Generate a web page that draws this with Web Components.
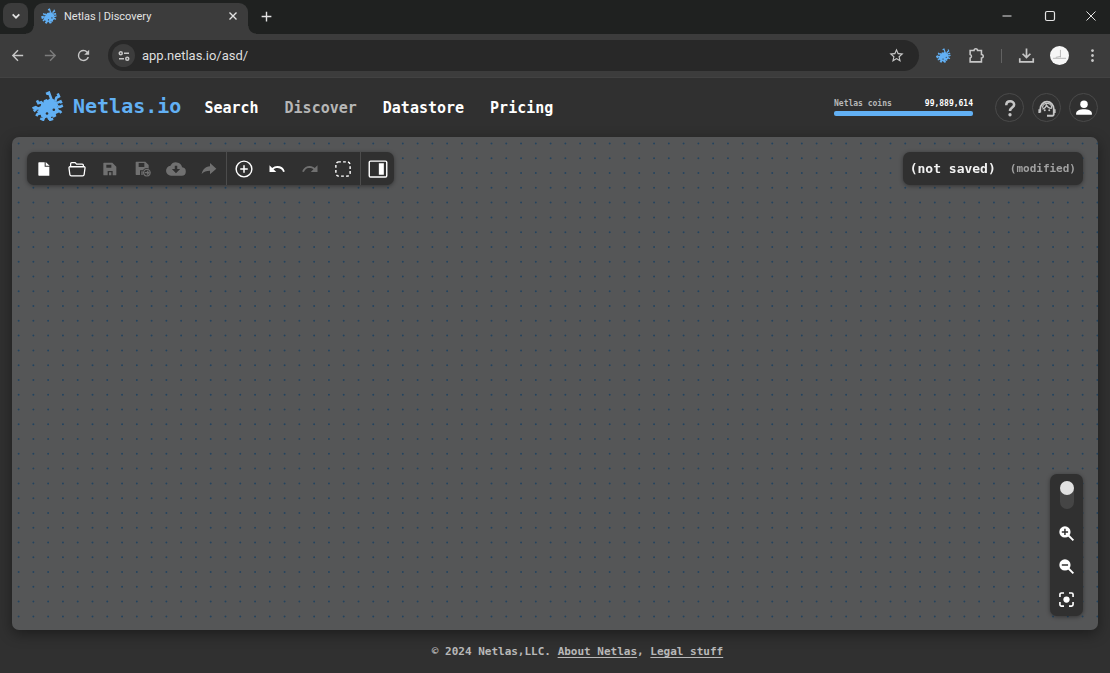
<!DOCTYPE html>
<html lang="en">
<head>
<meta charset="utf-8">
<title>Netlas | Discovery</title>
<style>
html, body { margin: 0; background: #303030; }
body { font-family: "DejaVu Sans Mono", "Liberation Mono", monospace; color: #fff; }
</style>
</head>
<body>
<browser-window></browser-window>
<script>
const define = (name, html, setup) => {
  const t = document.createElement('template');
  t.innerHTML = '<style>*{box-sizing:border-box}button{border:0;padding:0;margin:0;background:none;color:inherit;font:inherit;display:flex;align-items:center;justify-content:center}a{color:inherit}</style>' + html;
  customElements.define(name, class extends HTMLElement {
    constructor() {
      super();
      this.attachShadow({ mode: 'open' }).append(t.content.cloneNode(true));
    }
    connectedCallback() { if (setup) setup(this, this.shadowRoot); }
  });
};

const stroke = (d, w = 2) => `<path d="${d}" fill="none" stroke="currentColor" stroke-width="${w}"/>`;
const fill = d => `<path d="${d}" fill="currentColor" fill-rule="evenodd"/>`;
const ICONS = {
  chevron: stroke('M7 9.5l5 5 5-5', 2.6),
  close: stroke('M6 6l12 12M18 6L6 18', 2.4),
  winclose: stroke('M3 3l18 18M21 3L3 21', 2),
  plus: stroke('M12 3v18M3 12h18', 2.6),
  minimize: stroke('M3 12h18', 2),
  maximize: '<rect x="3" y="3" width="18" height="18" rx="3" fill="none" stroke="currentColor" stroke-width="2.400"/>',
  back: fill('M20 11H7.83l5.59-5.59L12 4l-8 8 8 8 1.41-1.41L7.83 13H20v-2z'),
  forward: fill('M12 4l-1.41 1.41L16.17 11H4v2h12.17l-5.58 5.59L12 20l8-8z'),
  reload: fill('M17.65 6.35A7.96 7.96 0 0 0 12 4a8 8 0 1 0 7.73 10h-2.08A6 6 0 1 1 12 6c1.66 0 3.14.69 4.22 1.78L13 11h7V4l-2.35 2.35z'),
  tune: '<g fill="none" stroke="currentColor" stroke-width="3"><circle cx="5.500" cy="6.500" r="3"/><path d="M12 6.500h10M2 17.500h10"/><circle cx="18.500" cy="17.500" r="3"/></g>',
  star: fill('M22 9.24l-7.19-.62L12 2 9.19 8.63 2 9.24l5.46 4.73L5.82 21 12 17.27 18.18 21l-1.63-7.03L22 9.24zM12 15.4l-3.76 2.27 1-4.28-3.32-2.88 4.38-.38L12 6.1l1.71 4.04 4.38.38-3.32 2.88 1 4.28L12 15.4z'),
  puzzle: stroke('M3 5h5.500a2.500 2.500 0 0 1 5 0H19v5.500a2.500 2.500 0 0 1 0 5V21H3v-5.500a2.600 2.600 0 0 0 0-5z', 2.200),
  download: stroke('M12 2v13M6.500 9.500l5.500 5.500 5.500-5.500M2.500 16v5h19V16', 2.400),
  dots: fill('M12 3a2 2 0 1 0 .01 0zM12 10a2 2 0 1 0 .01 0zM12 17a2 2 0 1 0 .01 0z'),
  file: fill('M4 2h9v6.500h7V22H4.500a1 1 0 0 1-1-1V3a1 1 0 0 1 1-1zM14.500 1.500L20.500 7h-6z'),
  folder: stroke('M3.500 9V5a1.500 1.500 0 0 1 1.500-1.500h4.500l2 2h7.500A1.500 1.500 0 0 1 20.500 7V9M2.500 9h19a1.200 1.200 0 0 1 1.200 1.500L21.500 19.500a2 2 0 0 1-2 1.700h-15a2 2 0 0 1-2-1.700L1.300 10.500A1.200 1.200 0 0 1 2.500 9z', 1.7),
  save: fill('M3 2.500h12.500l6 6v12a1 1 0 0 1-1 1H16v-6.500H8.500v6.500H3a1 1 0 0 1-1-1v-17a1 1 0 0 1 1-1zM6.500 5.500V10H14V5.500zM10.500 17h3.500V21.500h-3.500z'),
  saveas: fill('M2 1h13.500l5 5v5.500a6 6 0 0 0-8.500 2.500H7.500v7H2a1 1 0 0 1-1-1V2a1 1 0 0 1 1-1zM5.500 3V9H14V3zM9.500 15.500h2V21h-2z') + stroke('M17.800 12.500a5 5 0 1 1-.01 0M14.500 17.500h6M18 14.800l2.700 2.700L18 20.200', 1.8),
  cloud: fill('M19.350 10.040A7.500 7.500 0 0 0 5.350 8.040 6 6 0 0 0 6 20h13a5 5 0 0 0 .350-9.960zM10.500 8h3v4h3.500l-5 5-5-5h3.500z'),
  share: fill('M13.500 8V3l9.500 8.500-9.500 8.500v-5.500c-5.500 0-9.500 1.500-12.500 5C2.500 13.500 6 8.500 13.500 8z'),
  add: '<circle cx="12" cy="12" r="10.500" fill="none" stroke="currentColor" stroke-width="1.900"/>' + stroke('M12 7v10M7 12h10', 2),
  undo: fill('M12.500 8c-2.650 0-5.050.990-6.900 2.600L2 7v9h9l-3.620-3.620A8 8 0 0 1 20.080 16l2.370-.780A10.500 10.500 0 0 0 12.500 8z'),
  redo: fill('M18.400 10.600A10.500 10.500 0 0 0 1.540 15.220L3.900 16a8 8 0 0 1 12.720-3.620L13 16h9V7l-3.600 3.600z'),
  select: '<rect x="2.500" y="2.500" width="19" height="19" rx="4" fill="none" stroke="currentColor" stroke-width="1.900" stroke-dasharray="3.700 2.900" stroke-dashoffset="1"/>',
  panel: '<rect x="1.500" y="2.500" width="21" height="19" rx="1.500" fill="none" stroke="currentColor" stroke-width="1.700"/><path d="M13 5h6v14h-6z" fill="currentColor"/>',
  help: stroke('M7 8.200C7 1.200 17.500 1.400 17.500 7.800 17.500 11.500 12 11.500 12 16', 3.400) + '<circle cx="12" cy="21" r="2.200" fill="currentColor"/>',
  agent: stroke('M3 18v-4.500a9 10 0 0 1 18 0v7a1.800 1.800 0 0 1-1.800 1.800H12', 2.400) + stroke('M6 13.500c3-.8 4.800-3 5.200-5.300C12.800 11 15.500 12.700 18.500 12.300M6 11.500a6 5.500 0 0 1 12.300 0', 1.700) + stroke('M1.800 13.500v5M22.200 13.500v5', 2.600) + '<circle cx="9" cy="15" r="1.300" fill="currentColor"/><circle cx="15" cy="15" r="1.300" fill="currentColor"/>',
  user: '<circle cx="12" cy="7" r="5" fill="currentColor"/>' + fill('M1.500 21v-2c0-3.500 5-5.500 10.500-5.500s10.500 2 10.500 5.500v2z'),
  zoomin: '<circle cx="9.500" cy="9.500" r="9" fill="currentColor"/><path d="M9.500 4.500v10M4.500 9.500h10" stroke="#303030" stroke-width="2.400"/>' + stroke('M14 14l9 9', 3),
  zoomout: '<circle cx="9.500" cy="9.500" r="9" fill="currentColor"/><path d="M4.500 9.500h10" stroke="#303030" stroke-width="2.400"/>' + stroke('M14 14l9 9', 3),
  focus: '<circle cx="12" cy="12" r="5" fill="currentColor"/>' + stroke('M1.500 8V4a2.500 2.500 0 0 1 2.500-2.500h4M16 1.500h4a2.500 2.500 0 0 1 2.500 2.500v4M22.500 16v4a2.500 2.500 0 0 1-2.500 2.500h-4M8 22.500H4a2.500 2.500 0 0 1-2.500-2.500v-4', 2.600)
};

define('ui-icon', `<style>:host{display:block;width:16px;height:16px}svg{display:block;width:100%;height:100%;overflow:visible}</style><svg viewBox="0 0 24 24" aria-hidden="true"></svg>`,
  (el, root) => { root.querySelector('svg').innerHTML = ICONS[el.getAttribute('name')]; });

define('netlas-mark', `<style>:host{display:block;width:32px;height:30px;color:#62b0f4}svg{display:block;width:100%;height:100%}</style>
<svg viewBox="21 28 98 93" aria-hidden="true">
<path fill="currentColor" d="M49 68l6-3 2-8 9-4 3 3 6-4 12 1 4 7 6 1 5 12-3 3 5 9-3 2 3 8-10 4 2 7-9 5-4-4-8 4 2 5-6 2-4-8-9 3-9-5-2-7-8-3-3-8 6-3-4-8 9-4z"/>
<path fill="none" stroke="currentColor" stroke-width="8" d="M64 37l9-4 8 22M100 36l4 9-8 4-4 12M98 65l11-5 3 6M116 73l-9 4-8-1M36 57l4 9 9-3 8 8M22 82l10-4 10 6M26 91l8-7M98 88l10 4 3 4M60 104l-5 13-9-4M50 96l-13 4-3 6M74 104l3 13 9-3"/>
<circle cx="67" cy="98" r="4" fill="#303030"/><circle cx="88" cy="86" r="4" fill="#303030"/>
</svg>`);

define('tab-strip', `<style>
:host{display:flex;height:34px;background:#1f2120;color:#e3e3e3;font-family:Roboto,"Open Sans",sans-serif}
.search{width:25px;height:25px;margin:3px 6px 0 3px;border-radius:8px;background:#3c3c3c}
.search ui-icon{width:16px;height:16px}
.tab{position:relative;display:flex;align-items:center;width:214px;margin-top:3px;padding:0 8px 5px 7px;border-radius:9px 9px 0 0;background:#3c3c3c;font-size:11px}
.tab::before,.tab::after{content:"";position:absolute;bottom:0;width:8px;height:8px}
.tab::before{left:-8px;background:radial-gradient(circle at 0 0,#0000 7px,#3c3c3c 8px)}
.tab::after{right:-8px;background:radial-gradient(circle at 100% 0,#0000 7px,#3c3c3c 8px)}
netlas-mark{width:16px;height:16px;margin-right:7px}
.title{flex:1}
.x{width:14px;height:14px}.x ui-icon{width:14px;height:14px}
.new{width:37px;height:32px}
.new ui-icon{width:13px;height:13px}
.win{display:flex;margin-left:auto}
.win button{width:43px;height:32px}
.win ui-icon{width:12px;height:12px}
.win button:last-child{width:39px}
</style>
<button class="search" aria-label="Search tabs"><ui-icon name="chevron"></ui-icon></button>
<div class="tab"><netlas-mark></netlas-mark><span class="title"><slot></slot></span><button class="x" aria-label="Close tab"><ui-icon name="close"></ui-icon></button></div>
<button class="new" aria-label="New tab"><ui-icon name="plus"></ui-icon></button>
<div class="win"><button aria-label="Minimize"><ui-icon name="minimize"></ui-icon></button><button aria-label="Maximize"><ui-icon name="maximize"></ui-icon></button><button aria-label="Close window"><ui-icon name="winclose"></ui-icon></button></div>`);

define('address-bar', `<style>
:host{display:flex;align-items:center;height:44px;padding:0 1px;background:#3c3c3c;border-bottom:1px solid #424242;color:#c7c7c7}
button{width:33px;height:32px}
button[disabled]{color:#7c7c7c}
.url{display:flex;align-items:center;flex:1;height:31px;margin:0 8px 0 8px;padding:0 6px 0 4px;border-radius:16px;background:#282828}
.site{width:23px;height:23px;border-radius:50%;background:#3c3c3c}
.site ui-icon{width:12px;height:12px}
input{flex:1;min-width:0;margin:0 0 0 7px;padding:0;border:0;outline:0;background:none;color:#dedede;font:13px Roboto,"Open Sans",sans-serif}
netlas-mark{width:15px;height:15px}
.sep{width:1px;height:14px;margin:0 8px;background:#626262}
.avatar{width:19px;height:19px;border-radius:50%;background:#f6f6f6;color:#999}
.avatar svg{display:block;width:15px;height:15px;margin:2px}
ui-icon{width:17px;height:17px}
</style>
<button aria-label="Back"><ui-icon name="back"></ui-icon></button>
<button aria-label="Forward" disabled><ui-icon name="forward"></ui-icon></button>
<button aria-label="Reload"><ui-icon name="reload"></ui-icon></button>
<div class="url"><button class="site" aria-label="Site information"><ui-icon name="tune"></ui-icon></button><input aria-label="Address" value="app.netlas.io/asd/"><button aria-label="Bookmark"><ui-icon name="star"></ui-icon></button></div>
<button aria-label="Netlas extension"><netlas-mark></netlas-mark></button>
<button aria-label="Extensions"><ui-icon name="puzzle"></ui-icon></button>
<span class="sep"></span>
<button aria-label="Downloads"><ui-icon name="download"></ui-icon></button>
<button aria-label="Profile"><span class="avatar"><svg viewBox="0 0 16 16" fill="none" stroke="currentColor" stroke-width=".7"><path d="M9 2v8M1 11h14M4 10l5-1"/></svg></span></button>
<button aria-label="Menu"><ui-icon name="dots"></ui-icon></button>`);

define('coin-meter', `<style>
:host{display:block;width:139px}
label{display:flex;justify-content:space-between;margin-bottom:3px;font-size:8px;line-height:9px;font-weight:bold}
.n{color:#b8b8b8}
progress{display:block;width:100%;height:5px;appearance:none;border:0;border-radius:2px;overflow:hidden}
progress::-webkit-progress-bar{background:#555}
progress::-webkit-progress-value{background:#62b0f4}
</style>
<label for="p"><span class="n">Netlas coins</span><span><slot></slot></span></label>
<progress id="p" value="100" max="100"></progress>`);

define('app-header', `<style>
:host{display:flex;align-items:center;height:59px;padding:0 12px 0 32px}
.brand{display:flex;align-items:center;gap:9px;margin-bottom:4px;color:#62b0f4;font-size:20px;line-height:24px;font-weight:bold;text-decoration:none}
nav{display:flex;gap:26px;margin-left:23px}
nav a{font-size:15px;line-height:20px;font-weight:bold;text-decoration:none}
nav a[aria-current]{color:#b6b6b6}
coin-meter{margin-left:auto;margin-right:22px}
.round{display:flex;gap:8px}
.round button{width:29px;height:29px;border:1px solid #4a4a4a;border-radius:50%}
.round ui-icon{width:18px;height:18px;color:#c6c6c6}
.round ui-icon[name=user]{color:#fff}
</style>
<a class="brand" href="#home"><netlas-mark></netlas-mark><span>Netlas.io</span></a>
<nav><a href="#search">Search</a><a href="#discover" aria-current="page">Discover</a><a href="#datastore">Datastore</a><a href="#pricing">Pricing</a></nav>
<coin-meter>99,889,614</coin-meter>
<div class="round"><button aria-label="Help"><ui-icon name="help"></ui-icon></button><button aria-label="Support"><ui-icon name="agent"></ui-icon></button><button aria-label="Account"><ui-icon name="user"></ui-icon></button></div>`);

define('graph-toolbar', `<style>
:host{display:flex;height:33px;border-radius:7px;background:#303030;box-shadow:0 1px 4px #0006}
div{display:flex;width:199px}
div + div{width:134px;border-left:1px solid #4c4c4c}
div:last-child{width:34px}
button{flex:1}
button[disabled]{color:#707070}
ui-icon[name=folder],ui-icon[name=select],ui-icon[name=add],ui-icon[name=undo],ui-icon[name=redo]{width:18px;height:18px}
ui-icon[name=panel],ui-icon[name=cloud]{width:20px;height:20px}
</style>
<div><button aria-label="New"><ui-icon name="file"></ui-icon></button><button aria-label="Open"><ui-icon name="folder"></ui-icon></button><button aria-label="Save" disabled><ui-icon name="save"></ui-icon></button><button aria-label="Save as" disabled><ui-icon name="saveas"></ui-icon></button><button aria-label="Export" disabled><ui-icon name="cloud"></ui-icon></button><button aria-label="Share" disabled><ui-icon name="share"></ui-icon></button></div>
<div><button aria-label="Add node"><ui-icon name="add"></ui-icon></button><button aria-label="Undo"><ui-icon name="undo"></ui-icon></button><button aria-label="Redo" disabled><ui-icon name="redo"></ui-icon></button><button aria-label="Select area"><ui-icon name="select"></ui-icon></button></div>
<div><button aria-label="Toggle panel"><ui-icon name="panel"></ui-icon></button></div>`);

define('graph-status', `<style>
:host{display:flex;align-items:center;gap:14px;height:33px;padding:0 7px;border-radius:7px;background:#303030;box-shadow:0 1px 4px #0006;font-size:13px;white-space:nowrap}
b{font-weight:bold;color:#f2f2f2}
small{font-size:11px;font-weight:bold;color:#a0a0a0}
</style><b><slot></slot></b><small><slot name="state"></slot></small>`);

define('zoom-panel', `<style>
:host{display:flex;flex-direction:column;align-items:center;width:33px;padding:7px 0 0;border-radius:7px;background:#303030;box-shadow:0 1px 4px #0006}
input{appearance:none;width:14px;height:28px;margin:0 0 8px;border-radius:7px;background:#454545}
input::before{content:"";display:block;width:14px;height:14px;border-radius:50%;background:#e0e0e0}
button{width:33px;height:33px}
ui-icon{width:15px;height:15px}
</style>
<input type="checkbox" role="switch" aria-label="Lock graph">
<button aria-label="Zoom in"><ui-icon name="zoomin"></ui-icon></button>
<button aria-label="Zoom out"><ui-icon name="zoomout"></ui-icon></button>
<button aria-label="Fit"><ui-icon name="focus"></ui-icon></button>`);

define('graph-canvas', `<style>
:host{position:relative;display:flex;flex-direction:column;justify-content:space-between;margin:0 12px;padding:15px 15px 14px;border-radius:7px;overflow:hidden;background:#555657}
.grid{position:absolute;inset:0;width:100%;height:100%}
.top{position:relative;display:flex;justify-content:space-between;align-items:start}
zoom-panel{position:relative;align-self:flex-end}
</style>
<svg class="grid" aria-hidden="true"><defs><pattern id="dots" width="133" height="133" patternUnits="userSpaceOnUse"></pattern></defs><rect width="100%" height="100%" fill="url(#dots)"/></svg>
<div class="top"><graph-toolbar></graph-toolbar><graph-status>(not saved)<span slot="state">(modified)</span></graph-status></div>
<zoom-panel></zoom-panel>`,
  (el, root) => {
    // Nine dots per tile in each direction.
    let s = '';
    for (let r = 0; r < 9; r++) for (let c = 0; c < 9; c++)
      s += `<circle cx="${6.6 + c * 133 / 9}" cy="${6.5 + r * 133 / 9}" r="1" fill="#24435e"/>`;
    root.querySelector('pattern').innerHTML = s;
  });

define('app-footer', `<style>
:host{display:block;padding:14px 0 13px 45px;text-align:center;font-size:11px;line-height:16px;font-weight:bold;color:#b8b8b8}
a{text-underline-offset:2px;text-decoration-thickness:1px}
</style><footer>© 2024 Netlas,LLC. <a href="#about">About Netlas</a>, <a href="#legal">Legal stuff</a></footer>`);

define('browser-window', `<style>
:host{display:flex;flex-direction:column;min-height:100vh;background:#303030}
main{flex:1;display:flex;flex-direction:column;filter:drop-shadow(0 4px 7px #0006)}
graph-canvas{flex:1}
</style>
<tab-strip>Netlas | Discovery</tab-strip>
<address-bar></address-bar>
<app-header></app-header>
<main><graph-canvas></graph-canvas></main>
<app-footer></app-footer>`);
</script>
</body>
</html>
